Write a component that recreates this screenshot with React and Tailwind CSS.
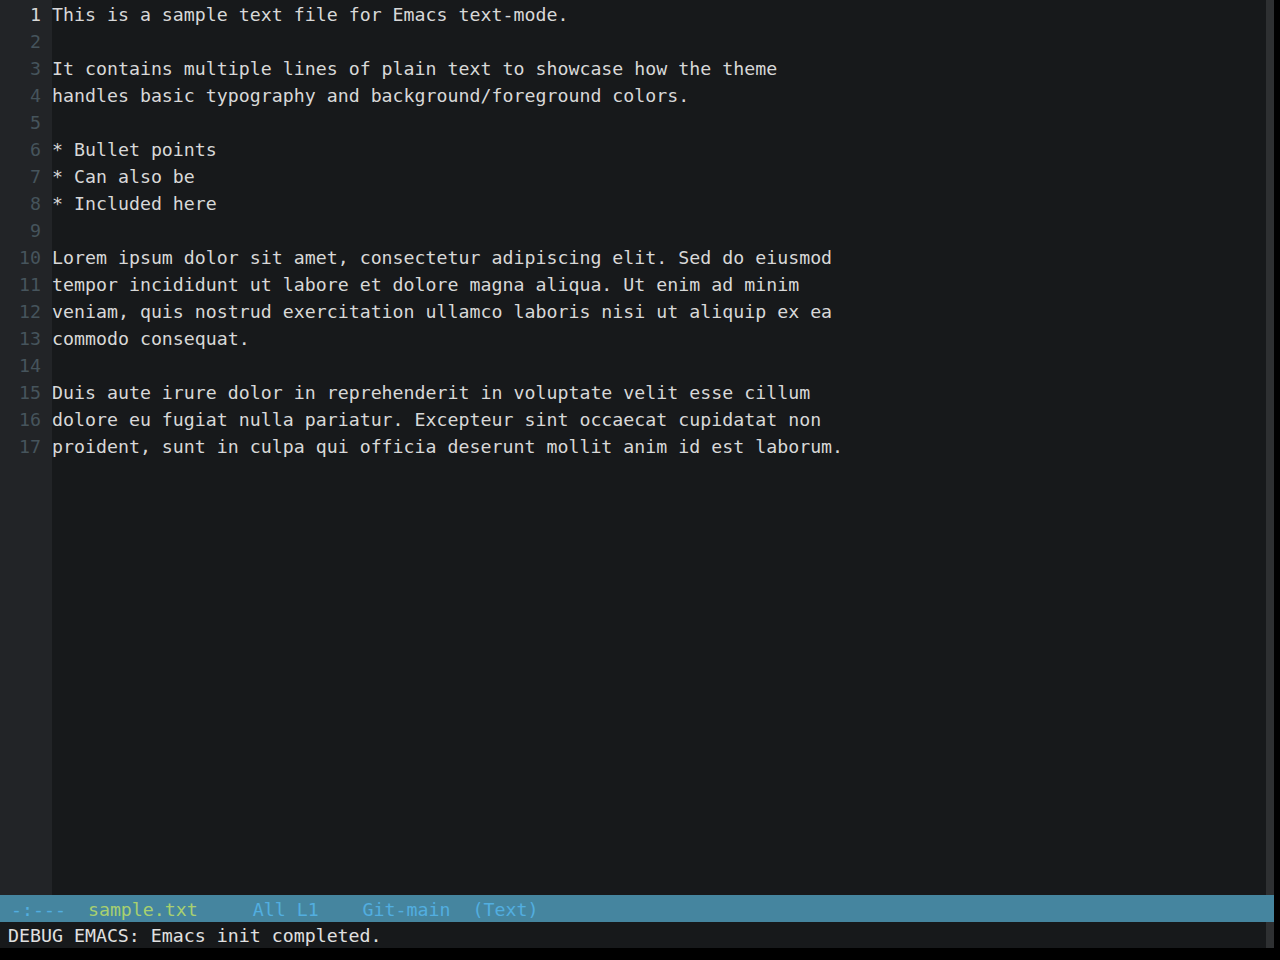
const lines = [
  'This is a sample text file for Emacs text-mode.',
  '',
  'It contains multiple lines of plain text to showcase how the theme',
  'handles basic typography and background/foreground colors.',
  '',
  '* Bullet points',
  '* Can also be',
  '* Included here',
  '',
  'Lorem ipsum dolor sit amet, consectetur adipiscing elit. Sed do eiusmod',
  'tempor incididunt ut labore et dolore magna aliqua. Ut enim ad minim',
  'veniam, quis nostrud exercitation ullamco laboris nisi ut aliquip ex ea',
  'commodo consequat.',
  '',
  'Duis aute irure dolor in reprehenderit in voluptate velit esse cillum',
  'dolore eu fugiat nulla pariatur. Excepteur sint occaecat cupidatat non',
  'proident, sunt in culpa qui officia deserunt mollit anim id est laborum.',
]

const mono = "font-['DejaVu_Sans_Mono',monospace] text-[18.25px] leading-[27px]"

export default function App() {
  return (
    <div className={`flex h-[960px] w-[1280px] bg-black ${mono}`}>
      <div className="flex h-[948px] w-[1274px] flex-col">
        <div className="flex h-[895px]">
          <div className="w-[52px] bg-[#222427] pt-[1px]">
            {lines.map((_, i) => (
              <div
                key={i}
                className={`w-[41px] text-right ${i === 0 ? 'text-[#d8d8d8]' : 'text-[#46545c]'}`}
              >
                {i + 1}
              </div>
            ))}
          </div>
          <div className="flex-1 whitespace-pre bg-[#17191b] pt-[1px] text-[#d8d8d8]">
            {lines.map((l, i) => (
              <div key={i} className="h-[27px]">{l}</div>
            ))}
          </div>
          <div className="w-[8px] bg-[#2e3032]" />
        </div>

        {/* mode line */}
        <div className="h-[27px] whitespace-pre bg-[#45859f] pt-[1px]">
          <span className="text-[#52aee0]"> -:---  </span>
          <span className="text-[#a8d070]">sample.txt</span>
          <span className="text-[#52aee0]">     All L1    Git-main  (Text)</span>
        </div>

        <div className="flex h-[26px]">
          <div className="flex-1 bg-[#17191b] pl-[8px] pt-[1px] leading-[26px] text-[#e0e0e0]">
            DEBUG EMACS: Emacs init completed.
          </div>
          <div className="w-[8px] bg-[#2e3032]" />
        </div>
      </div>
    </div>
  )
}
